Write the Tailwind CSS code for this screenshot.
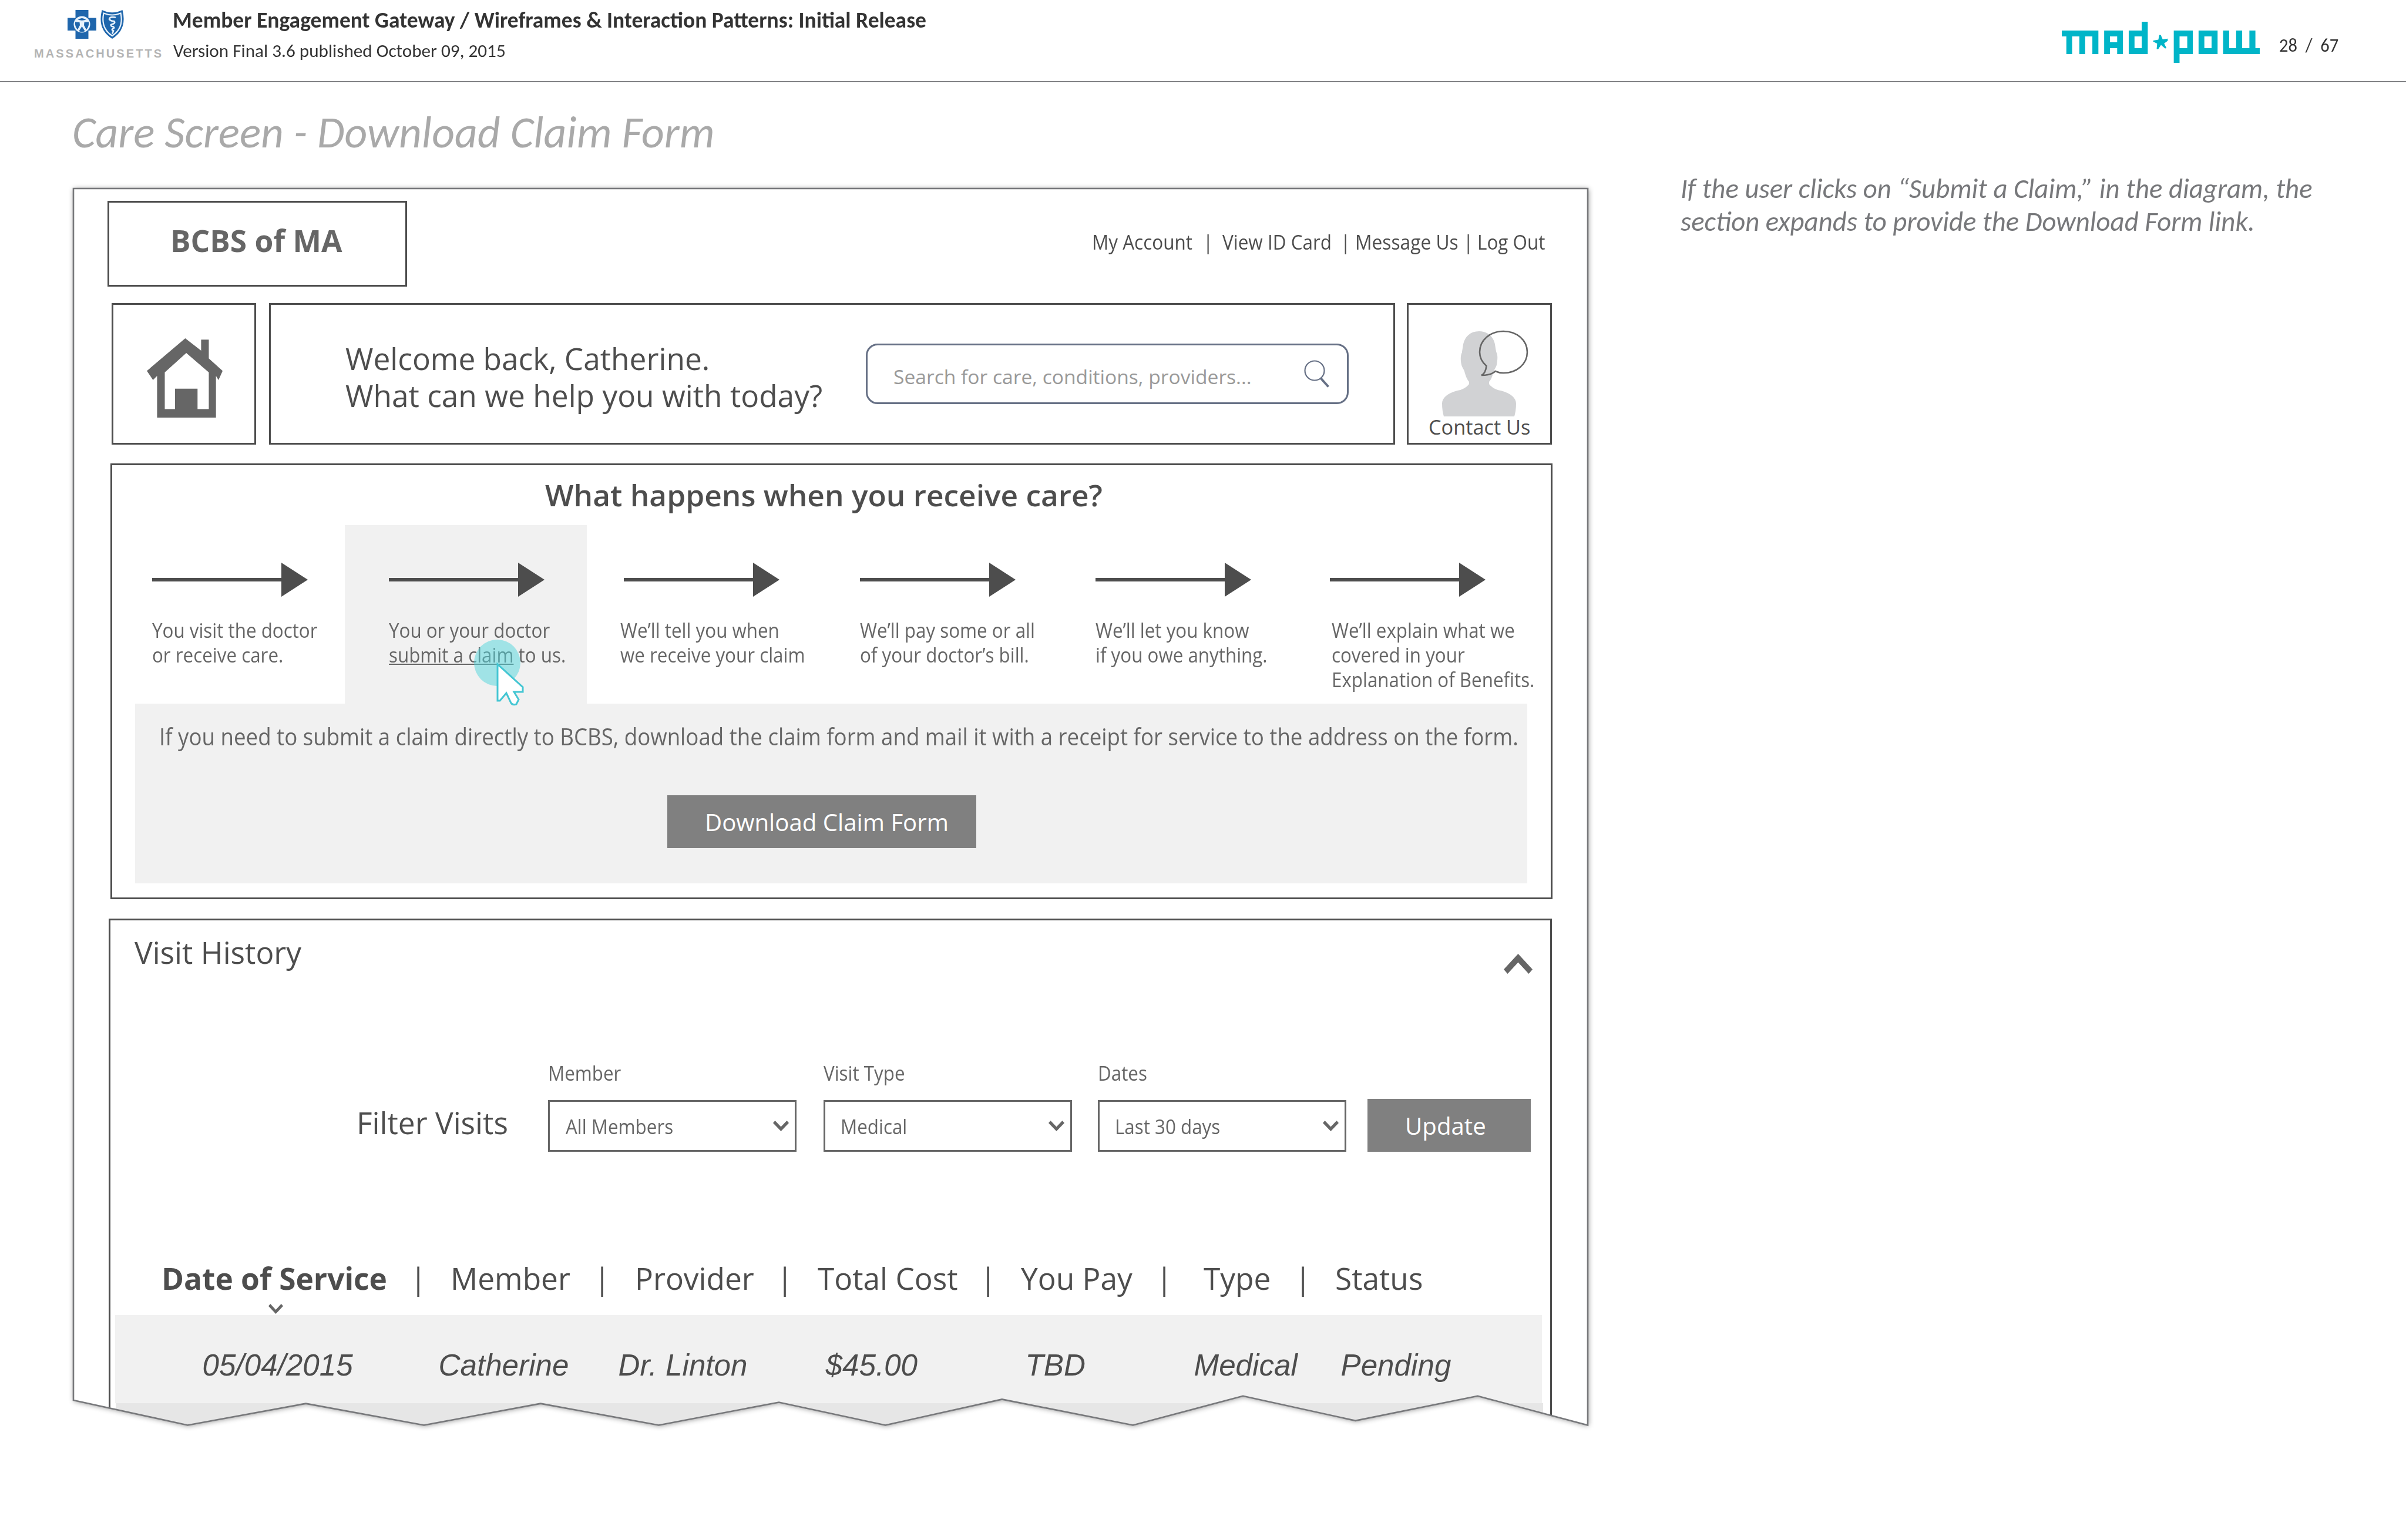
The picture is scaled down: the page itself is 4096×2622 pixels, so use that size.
<!DOCTYPE html>
<html lang="en">
<head>
<meta charset="utf-8">
<title>Care Screen - Download Claim Form</title>
<script src="https://cdn.jsdelivr.net/npm/@tailwindcss/browser@4"></script>
</head>
<body class="h-[2622px] w-[4096px] overflow-hidden bg-white font-['Open_Sans',sans-serif] text-[#4d4d4d]">

<svg class="hidden">
  <symbol id="arrow" viewBox="0 0 265 58"><path d="M0 26h220V0l45 29-45 29V32H0z" fill="#4d4d4d"/></symbol>
  <symbol id="caret" viewBox="0 0 27 18"><path d="M0 4 3.500 0 13.500 10.500 23.500 0 27 4 13.500 18z" fill="#666"/></symbol>
</svg>

<!-- Document header -->
<header class="flex h-[140px] items-start border-b-2 border-[#808184] font-[Carlito,Lato,sans-serif] text-[#333]">
  <div class="ml-[58px] w-[236px] shrink-0 pt-[17px]">
    <div class="ml-[57px] flex gap-[6px]">
      <svg class="h-[49px] w-[50px]" viewBox="0 0 50 49"><path d="M13.500 0h22v13.500H49V35H35.500v14h-22V35H0V13.500h13.500z" fill="#1f66ac"/><circle cx="24.500" cy="24.500" r="14" fill="#e8f2fb"/><path d="M17.500 16.500q7-5 14 0l-4 1h-6zM13 20.500l7.500.5.5 5-4 7.500q-5-6-4-13zM36 20.500l-7.500.5-.5 5 4 7.500q5-6 4-13zM24.500 28l5 8q-5 2.500-10 0z" fill="#1f66ac"/><circle cx="24.500" cy="16" r="1.800" fill="#1f66ac"/></svg>
      <svg class="h-[49px] w-[40px]" viewBox="0 0 40 49"><path d="M2.500 0Q20 8.500 37.500 0 46 33 20 49-6 33 2.500 0z" fill="#1f66ac"/><path d="M5.500 5.500Q20 11.500 34.500 5.500 40 31 20 44 0 31 5.500 5.500z" fill="none" stroke="#e8f2fb" stroke-width="2.200"/><path d="M25 12.500q-9-1.500-10 3 2 3.500 8 3.500 3 2.500-1 4.500l-4 1.500q-1 3 4 3.500 3 2-1 3.500-3 1.500 1 3.500l-1.500 4" fill="none" stroke="#e8f2fb" stroke-width="2.600" stroke-linecap="round"/></svg>
    </div>
    <div class="mt-[14px] whitespace-nowrap font-['Liberation_Sans',sans-serif] text-[20px] leading-[22px] font-bold tracking-[3.1px] text-[#b4b4b4]">MASSACHUSETTS</div>
  </div>
  <div class="w-[1400px] whitespace-nowrap pt-[9px]">
    <h1 class="w-max origin-left scale-x-[0.962] text-[39px] leading-[50px] font-bold">Member Engagement Gateway / Wireframes &amp; Interaction Patterns: Initial Release</h1>
    <p class="mt-[2px] ml-px w-max origin-left scale-x-[1.006] text-[31px] leading-[50px]">Version Final 3.6 published October 09, 2015</p>
  </div>
  <div class="ml-auto flex items-start">
    <svg class="mt-[37px] h-[70px] w-[337px]" viewBox="138 138 822 260" preserveAspectRatio="none" fill="#00b5c8">
      <path d="M138 194H290V342H265V231H235V342H211V231H181V342H157V231H138z"/>
      <path fill-rule="evenodd" d="M314 194H392V342H368V305H338V342H314zM338 231V268H368V231z"/>
      <path fill-rule="evenodd" d="M416 194H470V138H495V342H416zM440 231V305H470V231z"/>
      <path d="M543 222h6l8 27 21-4v14l-15 16 10 30-6 2-17-22-12 28-6-3 2-34-17-13 1-6 21-6z"/>
      <path fill-rule="evenodd" d="M603 194H682V342H627V398H603zM627 231V305H659V231z"/>
      <path fill-rule="evenodd" d="M706 194H785V342H706zM730 231V305H760V231z"/>
      <path d="M808 194H833V305H862V194H887V305H917V194H942V305H960V342H808z"/>
    </svg>
    <p class="mr-[114px] ml-[33px] mt-[53px] w-[102px] text-[32px] leading-[50px] whitespace-pre"><span class="inline-block origin-left scale-x-[0.953]">28  /  67</span></p>
  </div>
</header>

<main class="flex items-start">
  <div class="ml-[124px] w-[2580px] shrink-0">
    <h2 class="-ml-px h-[180px] w-max origin-left scale-x-[0.994] pt-[40px] font-[Carlito,Lato,sans-serif] text-[76px] leading-[90px] whitespace-nowrap text-[#a9a9a9] italic">Care Screen - Download Claim Form</h2>

    <!-- Wireframe sheet with torn lower edge -->
    <section class="relative h-[2107px]">
      <svg class="absolute inset-0 h-full w-full overflow-visible" viewBox="0 0 2580 2107">
        <defs><filter id="soft" x="-2%" y="-2%" width="104%" height="104%"><feDropShadow dx="1" dy="1" stdDeviation="5" flood-color="#000" flood-opacity=".45"/></filter></defs>
        <path filter="url(#soft)" fill="#fff" d="M1 1V2064L195.500 2106.500 396.700 2069.600 597.800 2106.500 796.300 2069.600 997.500 2106.500 1202 2067.500 1383.200 2106.500 1581.800 2062.400 1804.800 2106.500 1992 2056.800 2183.500 2098.800 2391.600 2056.800 2579 2106.500V1z"/>
      </svg>

      <div class="relative h-full overflow-hidden [clip-path:polygon(0_0,1px_2064px,195.5px_2106.5px,396.7px_2069.6px,597.8px_2106.5px,796.3px_2069.6px,997.5px_2106.5px,1202px_2067.5px,1383.2px_2106.5px,1581.8px_2062.4px,1804.8px_2106.5px,1992px_2056.8px,2183.5px_2098.8px,2391.6px_2056.8px,2579px_2106.5px,2580px_0)]">

        <!-- Brand and utility links -->
        <div class="flex items-start pt-[22px] pl-[59px]">
          <div class="h-[146px] w-[510px] border-3 border-[#4d4d4d] pt-[34px] pl-[104px] text-[51.4px] leading-[60px] font-bold whitespace-nowrap text-[#666]">BCBS of MA</div>
          <nav class="mt-[50px] ml-[1166px] grid grid-cols-[188.5px_33.5px_201.4px_24.600px_183.800px_24.200px_130px] text-[34.3px] leading-[40px] whitespace-nowrap">
            <a class="w-max origin-left scale-x-[0.917]">My Account</a><span class="w-max origin-left scale-x-[0.917]">|</span>
            <a class="w-max origin-left scale-x-[0.917]">View ID Card</a><span class="w-max origin-left scale-x-[0.917]">|</span>
            <a class="w-max origin-left scale-x-[0.925]">Message Us</a><span class="w-max origin-left scale-x-[0.917]">|</span>
            <a class="w-max origin-left scale-x-[0.917]">Log Out</a>
          </nav>
        </div>

        <!-- Welcome bar -->
        <div class="mt-[28px] flex h-[241px] pl-[66px]">
          <div class="w-[246px] border-3 border-[#4d4d4d] pt-[57px] pl-[57px]">
            <svg class="h-[135px] w-[129px]" viewBox="167 882 148 438" preserveAspectRatio="none"><path fill="#666" fill-rule="evenodd" d="M242 882 273 950V889H288V993L315 1062 307 1112 302 1090V1320H187V1090L179 1112 167 1062zM244 963 202 1070V1273H222V1160H266V1273H288V1070z"/></svg>
          </div>
          <div class="ml-[22px] flex w-[1917px] items-start border-3 border-[#4d4d4d] pl-[127px]">
            <p class="mt-[60px] w-[886px] text-[51.4px] leading-[62.7px] whitespace-nowrap">Welcome back, Catherine.<br>What can we help you with today?</p>
            <div class="mt-[66px] flex h-[103px] w-[822px] items-start rounded-[20px] border-3 border-[#667085] pt-[24px] pr-[30px] pl-[44px]">
              <span class="mt-[9px] w-max text-[33.6px] leading-[40px] whitespace-nowrap text-[#999]">Search for care, conditions, providers...</span>
              <svg class="ml-auto h-[48px] w-[43px]" viewBox="0 0 43 48" fill="none" stroke="#667085"><circle cx="18" cy="19" r="16.500" stroke-width="2.200"/><path d="M28.500 32 41.500 46.500" stroke-width="4"/></svg>
            </div>
          </div>
          <div class="ml-[20px] w-[247px] border-3 border-[#4d4d4d] pt-[43px]">
            <svg class="ml-[57px] h-[148px] w-[146px] overflow-visible" viewBox="0 0 146 148" fill="none"><path fill="#d1d2d4" d="M63 2C78 2 87 11 90 24 91 31 92 36 92.500 38 95 42 94.600 50 93 59 92 63 90 65 88 70 86 78 83 85 80 88V92Q87 101 100 103C118 108 126 116 126 125Q126 137 123 147H3Q0 137 0 125C0 116 8 108 26 103Q39 101 46 92V88C43 85 40 78 38 70 36 65 34 63 33 59 31 50 31.500 42 34 38 34 36 35 31 36 24 39 11 48 2 63 2z"/><path stroke="#666" stroke-width="2.600" d="M67 77Q74 74 75.500 61 64 51 64 37.500C64 17 82 2 104.500 2S145 17 145 37.500 127 73 104.500 73Q97 73 90.500 70 84 77 67 77z"/></svg>
            <p class="ml-[34px] text-[34.3px] leading-[34px] whitespace-nowrap">Contact Us</p>
          </div>
        </div>

        <!-- Care steps -->
        <div class="mt-[32px] ml-[64px] h-[742px] w-[2455px] border-3 border-[#4d4d4d]">
          <h3 class="mt-[20px] ml-[737px] text-[51.4px] leading-[60px] font-semibold whitespace-nowrap">What happens when you receive care?</h3>
          <div class="mt-[22px] ml-[39px] flex h-[304px] text-[34.3px] leading-[41.8px] whitespace-nowrap text-[#666]">
            <div class="w-[357px] shrink-0 pt-[64px] pl-[29px]">
              <svg class="h-[58px] w-[265px]"><use href="#arrow"/></svg>
              <p class="mt-[36px] w-max origin-left scale-x-[0.914]">You visit the doctor<br>or receive care.</p>
            </div>
            <div class="relative w-[412px] shrink-0 bg-[#f1f1f1] pt-[64px] pl-[75px]">
              <svg class="h-[58px] w-[265px]"><use href="#arrow"/></svg>
              <p class="mt-[36px] w-max origin-left scale-x-[0.914]">You or your doctor<br><span class="underline decoration-2 underline-offset-[2px]">submit a claim</span> to us.</p>
              <div class="absolute top-[195px] left-[220px] size-[79px] rounded-full bg-[#50d5db]/50"></div>
              <svg class="absolute top-[233px] left-[258px] h-[75px] w-[47px]" viewBox="0 0 47 75"><path d="M2 4V66H6L17 53 25 70Q28 74 34 72L38 64 30 51H45L45 43z" fill="#fff" stroke="#44c6d3" stroke-width="3"/></svg>
            </div>
            <div class="w-[465px] shrink-0 pt-[64px] pl-[57px]">
              <svg class="ml-[6px] h-[58px] w-[265px]"><use href="#arrow"/></svg>
              <p class="mt-[36px] w-max origin-left scale-x-[0.914]">We’ll tell you when<br>we receive your claim</p>
            </div>
            <div class="w-[400.500px] shrink-0 pt-[64px]">
              <svg class="h-[58px] w-[265px]"><use href="#arrow"/></svg>
              <p class="mt-[36px] w-max origin-left scale-x-[0.914]">We’ll pay some or all<br>of your doctor’s bill.</p>
            </div>
            <div class="w-[399.500px] shrink-0 pt-[64px]">
              <svg class="h-[58px] w-[265px]"><use href="#arrow"/></svg>
              <p class="mt-[36px] w-max origin-left scale-x-[0.914]">We’ll let you know<br>if you owe anything.</p>
            </div>
            <div class="w-[370px] shrink-0 pt-[64px]">
              <svg class="h-[58px] w-[265px]"><use href="#arrow"/></svg>
              <p class="mt-[36px] ml-[3px] w-max origin-left scale-x-[0.914]">We’ll explain what we<br>covered in your<br>Explanation of Benefits.</p>
            </div>
          </div>
          <div class="ml-[39px] h-[306px] w-[2370px] bg-[#f1f1f1] pt-[31px]">
            <p class="ml-[41px] w-max origin-left scale-x-[0.912] text-[40.200px] leading-[50px] whitespace-nowrap text-[#666]">If you need to submit a claim directly to BCBS, download the claim form and mail it with a receipt for service to the address on the form.</p>
            <button class="mt-[75px] ml-[906px] flex h-[90px] w-[526px] items-center bg-[#808080] pt-px pl-[64px] text-[40.200px] leading-[50px] whitespace-nowrap text-white">Download Claim Form</button>
          </div>
        </div>

        <!-- Visit history -->
        <div class="mt-[33px] ml-[61px] h-[900px] w-[2457px] border-3 border-[#4d4d4d]">
          <div class="mt-[24px] flex h-[67px] items-start pr-[30px] pl-[41px]">
            <h3 class="text-[51.4px] leading-[60px]">Visit History</h3>
            <svg class="mt-[33px] ml-auto h-[34px] w-[49px]" viewBox="0 0 49 34"><path d="M0 26.500 24.500 0 49 26.500 42.500 34 24.500 14.500 6.500 34z" fill="#666"/></svg>
          </div>

          <div class="mt-[149px] ml-[419px] flex items-end text-[34.3px] leading-[40px] whitespace-nowrap text-[#666]">
            <span class="mb-[20px] w-[326px] text-[51.4px] leading-[60px] text-[#4d4d4d]">Filter Visits</span>
            <label class="w-[423px]">
              <span class="block w-max origin-left scale-x-[0.914]">Member</span>
              <span class="mt-[26px] flex h-[88px] items-center justify-between border-3 border-[#666] pr-[10px] pl-[27px]"><span class="origin-left scale-x-[0.914] pt-px">All Members</span><svg class="h-[18px] w-[27px]"><use href="#caret"/></svg></span>
            </label>
            <label class="ml-[46px] w-[423px]">
              <span class="block w-max origin-left scale-x-[0.914]">Visit Type</span>
              <span class="mt-[26px] flex h-[88px] items-center justify-between border-3 border-[#666] pr-[10px] pl-[26px]"><span class="origin-left scale-x-[0.914] pt-px">Medical</span><svg class="h-[18px] w-[27px]"><use href="#caret"/></svg></span>
            </label>
            <label class="ml-[44px] w-[423px]">
              <span class="block w-max origin-left scale-x-[0.914]">Dates</span>
              <span class="mt-[26px] flex h-[88px] items-center justify-between border-3 border-[#666] pr-[10px] pl-[26px]"><span class="origin-left scale-x-[0.914] pt-px">Last 30 days</span><svg class="h-[18px] w-[27px]"><use href="#caret"/></svg></span>
            </label>
            <button class="ml-[36px] flex h-[90px] w-[278px] items-center bg-[#808080] pt-px pl-[64px] text-[40.200px] text-white">Update</button>
          </div>

          <div class="mt-[185px] ml-[87px] grid grid-cols-[423px_69px_244px_70px_241px_70px_276px_70px_230px_81px_155px_69px_200px] text-[51.4px] leading-[60px] whitespace-nowrap">
            <span class="font-bold">Date of Service</span><span>|</span><span>Member</span><span>|</span><span>Provider</span><span>|</span><span>Total Cost</span><span>|</span><span>You Pay</span><span>|</span><span>Type</span><span>|</span><span>Status</span>
          </div>
          <svg class="mt-[14px] mb-[2px] ml-[269px] block h-[17px] w-[25px]" viewBox="0 0 27 18" preserveAspectRatio="none"><path d="M0 4 3.500 0 13.500 10.500 23.500 0 27 4 13.500 18z" fill="#666"/></svg>
          <div class="ml-[8px] grid h-[150px] w-[2429px] grid-cols-[402px_306px_353px_340px_287px_250px_200px] bg-[#f1f1f1] pt-[56px] pl-[148.5px] font-['Liberation_Sans',sans-serif] text-[51.2px] leading-[60px] whitespace-nowrap italic">
            <span>05/04/2015</span><span>Catherine</span><span>Dr. Linton</span><span>$45.00</span><span>TBD</span><span>Medical</span><span>Pending</span>
          </div>
          <div class="ml-[9px] h-[100px] w-[2430px] bg-[#e6e6e6]"></div>
        </div>
      </div>

      <svg class="absolute inset-0 h-full w-full overflow-visible" viewBox="0 0 2580 2107"><path fill="none" stroke="#77787b" stroke-width="2.600" d="M1 1V2064L195.500 2106.500 396.700 2069.600 597.800 2106.500 796.300 2069.600 997.500 2106.500 1202 2067.500 1383.200 2106.500 1581.800 2062.400 1804.800 2106.500 1992 2056.800 2183.500 2098.800 2391.600 2056.800 2579 2106.500V1z"/></svg>
    </section>
  </div>

  <aside class="mt-[153px] ml-[157px] w-max origin-left scale-x-[1.007] font-[Carlito,Lato,sans-serif] text-[46.500px] leading-[56.200px] whitespace-nowrap text-[#77787b] italic">If the user clicks on “Submit a Claim,” in the diagram, the<br>section expands to provide the Download Form link.</aside>
</main>
</body>
</html>
